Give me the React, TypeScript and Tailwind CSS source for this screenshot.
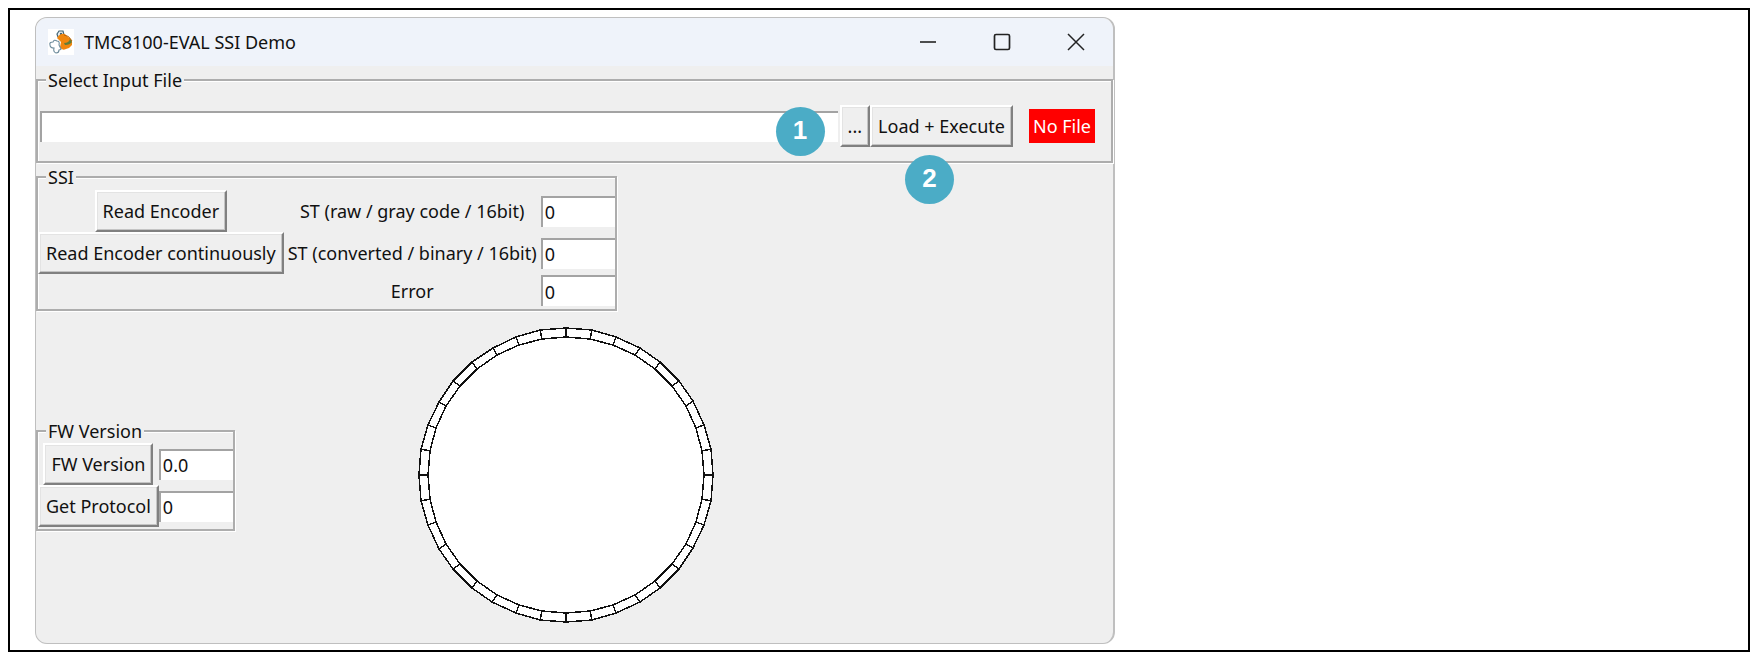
import type { ReactNode } from "react";

const SEGMENTS = 36;
const CENTER = 148;
const OUTER_RADIUS = 147;
const INNER_RADIUS = 138;

function ringPoint(index: number, radius: number) {
  const angle = (index * 2 * Math.PI) / SEGMENTS;
  const x = Math.round(CENTER + radius * Math.sin(angle));
  const y = Math.round(CENTER - radius * Math.cos(angle));
  return `${x},${y}`;
}

function EncoderDial() {
  const steps = Array.from({ length: SEGMENTS }, (_, i) => i);
  return (
    <svg
      width="296"
      height="296"
      viewBox="0 0 296 296"
      shapeRendering="crispEdges"
      fill="#fff"
      stroke="#111"
      strokeWidth="1.5"
      role="img"
      aria-label="Encoder position"
    >
      <polygon points={steps.map((i) => ringPoint(i, OUTER_RADIUS)).join(" ")} />
      {steps.map((i) => (
        <polygon
          key={i}
          points={[
            ringPoint(i, OUTER_RADIUS),
            ringPoint(i + 1, OUTER_RADIUS),
            ringPoint(i + 1, INNER_RADIUS),
            ringPoint(i, INNER_RADIUS),
          ].join(" ")}
        />
      ))}
    </svg>
  );
}

function AppIcon() {
  return (
    <svg width="26" height="26" viewBox="0 0 26 26" aria-hidden="true">
      <rect width="26" height="26" fill="#fff" />
      <path
        d="M10 8 L9 5 L11 2 L15 2 L16 6"
        fill="#e8eef0"
        stroke="#3f6275"
        strokeWidth="1.2"
      />
      <circle cx="13" cy="5" r="1.2" fill="#3f6275" />
      <path
        d="M9 9 Q12 4 17 5 L20 8 Q25 10 24 16 Q22 19 18 20 Q14 22 12 18 L13 13 Z"
        fill="#f0860f"
      />
      <path d="M16 6 Q21 6 24 12" fill="none" stroke="#b8650f" strokeWidth="1" />
      <path d="M16 14 Q21 14 22 10 L24 13 Q22 16 17 16 Z" fill="#5d7d3c" />
      <path
        d="M2 16 Q1 13 5 13 Q6 10 9 12 Q12 12 11 16 L13 20 Q12 21 11 21 Q11 24 8 24 Q5 23 6 19 Q2 19 2 16 Z"
        fill="#fff"
        stroke="#6d8b9b"
        strokeWidth="1.1"
      />
    </svg>
  );
}

function Group({ title, className = "", children }: { title: string; className?: string; children: ReactNode }) {
  return (
    <fieldset
      className={`border-2 border-[#adadad] shadow-[inset_1px_1px_0_#fff,1px_1px_0_#fff] ${className}`}
    >
      <legend className="ml-2 bg-[#efefef] px-0.5 leading-6">{title}</legend>
      {children}
    </fieldset>
  );
}

function TkButton({ children }: { children: ReactNode }) {
  return (
    <button
      type="button"
      className="h-[42px] border-2 border-t-white border-r-[#808080] border-b-[#808080] border-l-white bg-[#efefef] px-1.5 whitespace-nowrap shadow-[inset_-1px_-1px_0_#c4c4c4,inset_1px_1px_0_#e3e3e3]"
    >
      {children}
    </button>
  );
}

function Entry({ id, value, label }: { id: string; value: string; label?: string }) {
  return (
    <input
      id={id}
      aria-label={label}
      defaultValue={value}
      className="my-px h-[31px] w-[74px] border-t-2 border-l-2 border-[#a3a3a3] bg-white px-0.5 outline-none"
    />
  );
}

function Badge({ className, children }: { className: string; children: ReactNode }) {
  return (
    <span
      className={`absolute flex size-[49px] items-center justify-center rounded-full bg-[#4bacc6] pb-1 font-['Liberation_Sans',sans-serif] text-[26px] font-bold text-white ${className}`}
    >
      {children}
    </span>
  );
}

export default function App() {
  return (
    <div className="bg-white pt-2 pr-[5px] pb-0.5 pl-2 font-['Noto_Sans',sans-serif] text-[18px] leading-6 text-[#111]">
      <main className="border-2 border-black bg-white py-[7px] pr-4 pb-1.5 pl-[25px]">
        <div className="w-full max-w-[1080px] rounded-xl border border-r-2 border-[#bfbfbf] bg-[#efefef]">
          <header className="flex h-12 items-center rounded-t-xl bg-[#eff3fa] pl-3">
            <AppIcon />
            <h1 className="ml-2.5">TMC8100-EVAL SSI Demo</h1>
            <div className="ml-auto flex text-[#222]">
              <button type="button" aria-label="Minimize" className="flex w-[74px] justify-center">
                <svg width="18" height="18" viewBox="0 0 18 18" stroke="currentColor" strokeWidth="1.6">
                  <path d="M1 9h16" />
                </svg>
              </button>
              <button type="button" aria-label="Maximize" className="flex w-[74px] justify-center">
                <svg width="18" height="18" viewBox="0 0 18 18" fill="none" stroke="currentColor" strokeWidth="1.7">
                  <rect x="1.5" y="1.5" width="15" height="15" rx="1.5" />
                </svg>
              </button>
              <button type="button" aria-label="Close" className="flex w-[74px] justify-center">
                <svg width="18" height="18" viewBox="0 0 18 18" stroke="currentColor" strokeWidth="1.5">
                  <path d="M1 1l16 16M17 1L1 17" />
                </svg>
              </button>
            </div>
          </header>

          {/* Input file */}
          <Group title="Select Input File" className="mt-0.5 pb-3.5">
            <div className="flex items-center pt-[13px] pr-4">
              <input
                aria-label="Input file"
                className="ml-0.5 h-[31px] min-w-0 flex-1 border-t-2 border-l-2 border-[#a3a3a3] bg-white px-1 outline-none"
              />
              <div className="relative ml-0.5">
                <TkButton>...</TkButton>
                <Badge className="top-0.5 -left-16">1</Badge>
              </div>
              <div className="relative">
                <TkButton>Load + Execute</TkButton>
                <Badge className="top-[50px] left-[35px]">2</Badge>
              </div>
              <output className="ml-4 bg-[#ff0000] px-1 py-[5px] whitespace-nowrap text-white">
                No File
              </output>
            </div>
          </Group>

          {/* Encoder readout */}
          <Group title="SSI" className="mt-0.5 w-fit pb-0.5">
            <div className="grid grid-cols-[auto_auto_auto] items-center justify-items-center pt-px">
              <TkButton>Read Encoder</TkButton>
              <label htmlFor="st-raw" className="px-1">
                ST (raw / gray code / 16bit)
              </label>
              <Entry id="st-raw" value="0" />
              <TkButton>Read Encoder continuously</TkButton>
              <label htmlFor="st-converted" className="px-1">
                ST (converted / binary / 16bit)
              </label>
              <Entry id="st-converted" value="0" />
              <label htmlFor="error" className="col-start-2 px-1">
                Error
              </label>
              <Entry id="error" value="0" />
            </div>
          </Group>

          {/* Firmware and dial */}
          <div className="flex items-center gap-[183px] pt-4 pb-5">
            <Group title="FW Version" className="pb-0.5">
              <div className="grid grid-cols-[auto_auto] items-center justify-items-center">
                <TkButton>FW Version</TkButton>
                <Entry id="fw-version" label="FW version" value="0.0" />
                <TkButton>Get Protocol</TkButton>
                <Entry id="protocol" label="Protocol" value="0" />
              </div>
            </Group>
            <EncoderDial />
          </div>
        </div>
      </main>
    </div>
  );
}
